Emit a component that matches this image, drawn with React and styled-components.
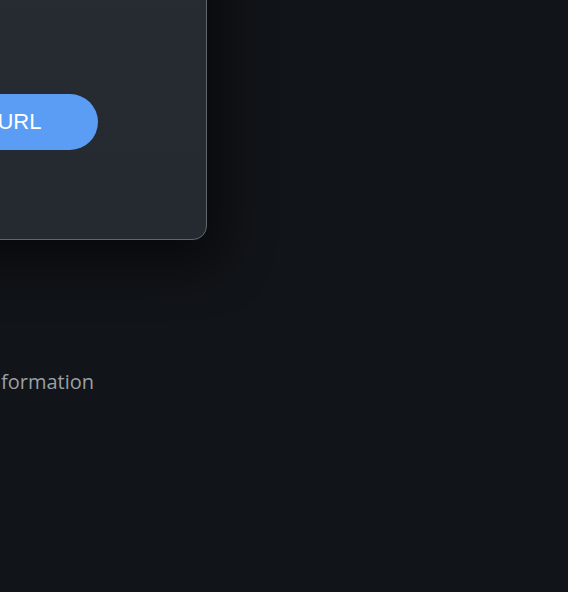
import styled, { createGlobalStyle } from "styled-components";

const GlobalStyle = createGlobalStyle`
  html, body {
    margin: 0;
    padding: 0;
    background: #111418;
  }
`;

const Page = styled.div`
  width: 568px;
  height: 592px;
  overflow: hidden;
  background: #111418;
  font-family: "Liberation Sans", Arial, sans-serif;
`;

// the view starts inside the page, so the stage is pulled up and left
const Stage = styled.div`
  margin-left: -228px;
  margin-top: -160px;
  display: flex;
  flex-direction: column;
  align-items: flex-start;
`;

const Card = styled.div`
  box-sizing: border-box;
  width: 435px;
  height: 400px;
  display: flex;
  flex-direction: column;
  align-items: center;
  justify-content: flex-end;
  padding-bottom: 89px;
  background: linear-gradient(180deg, #262c32 0%, #242a2f 100%);
  border: 1px solid #62676b;
  border-radius: 14px;
  box-shadow: 0 10px 50px 12px rgba(0, 0, 0, 0.6);
`;

const Button = styled.button`
  width: 217px;
  height: 56px;
  border: none;
  border-radius: 28px;
  background: #5b9cf5;
  color: #ffffff;
  font-family: "Liberation Sans", Arial, sans-serif;
  font-size: 22px;
  display: flex;
  align-items: center;
  justify-content: center;
  cursor: pointer;
`;

const Note = styled.p`
  margin: 128px 0 0;
  width: 322px;
  text-align: right;
  font-family: "Open Sans", Roboto, sans-serif;
  font-size: 20px;
  color: #9aa0a6;
`;

const App = () => {
  return (
    <Page>
      <GlobalStyle />
      <Stage>
        <Card>
          <Button>Open URL</Button>
        </Card>
        <Note>More information</Note>
      </Stage>
    </Page>
  );
};

export default App;
